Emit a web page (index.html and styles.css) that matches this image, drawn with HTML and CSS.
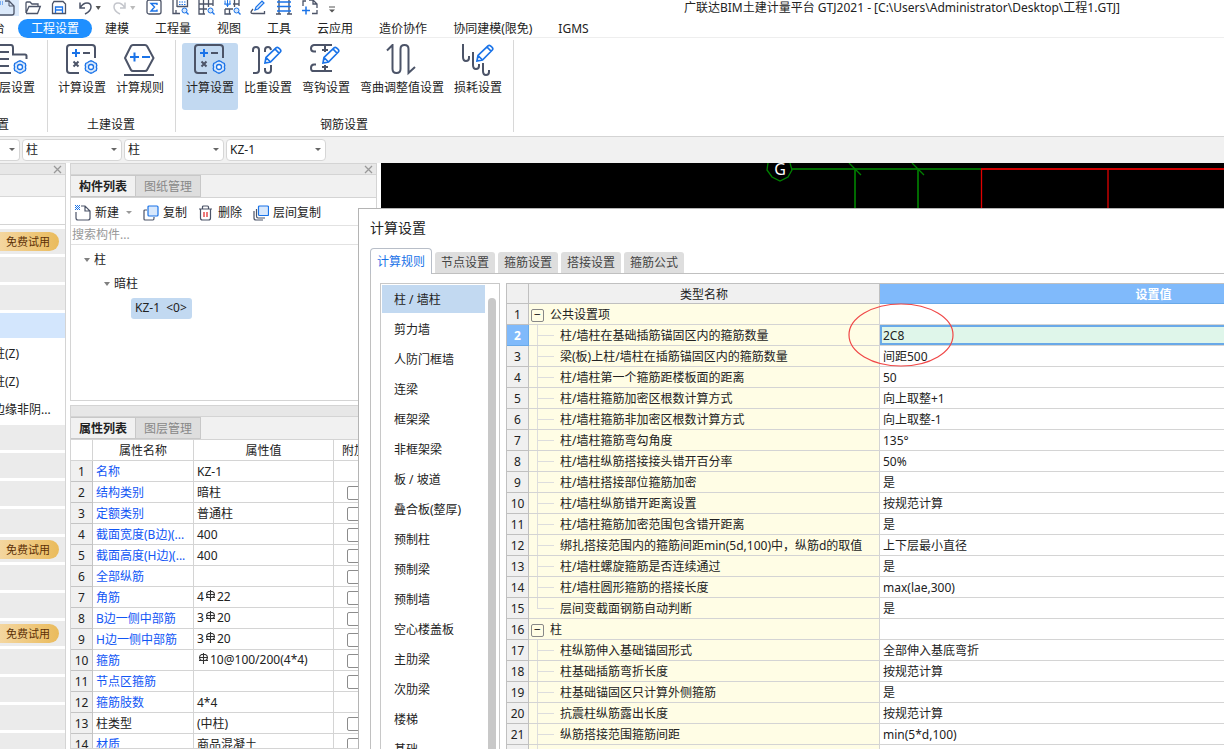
FILE: index.html
```html
<!DOCTYPE html>
<html lang="zh-CN">
<head>
<meta charset="utf-8">
<title>广联达BIM土建计量平台 GTJ2021</title>
<link rel="stylesheet" href="styles.css">
</head>
<body>
<svg class="defs" aria-hidden="true">
  <symbol id="gear" viewBox="0 0 14 14"><path d="M5 1.500 7 .8 9 1.500 10.300 2.500 12.300 3.500 12.800 5.800 12.300 7 12.800 8.200 12.300 10.500 10.300 11.500 9 12.500 7 13.200 5 12.500 3.700 11.500 1.700 10.500 1.200 8.200 1.700 7 1.200 5.800 1.700 3.500 3.700 2.500Z" fill="#d8e8fc" stroke="#1a73e8" stroke-width="1.300"/><circle cx="7" cy="7" r="2.500" fill="#fff" stroke="#1a73e8" stroke-width="1.300"/></symbol>
  <symbol id="pencil" viewBox="0 0 18 18"><path d="M1 17 2 11.500 12 1.800Q13.200 .8 14.500 1.800L16.300 3.500Q17.300 4.800 16.300 6L6.500 16Z M2 11.500 6.500 16 M11 3 15 7.200" fill="none" stroke="#1a73e8" stroke-width="1.700"/></symbol>
  <symbol id="calc" viewBox="0 0 32 32"><path d="M29 14V4Q29 1 26 1H4Q1 1 1 4V26Q1 29 4 29H13M17 9H24M7.500 17.500 12.500 22.500M12.500 17.500 7.500 22.500" fill="none" stroke="#4c5468" stroke-width="2"/><path d="M6 9H14M10 5V13" stroke="#1a73e8" stroke-width="2"/><use href="#gear" x="18" y="16" width="14" height="14"/></symbol>
  <symbol id="rebar" viewBox="0 0 11 11"><path d="M5.500 0V11M1 4.500H10M1 7.500H10M3.500 1.500Q1.500 2.500 1.500 4.500T3.500 7.500M7.500 1.500Q9.500 2.500 9.500 4.500T7.500 7.500M3.500 1.500H7.500" fill="none" stroke="#333" stroke-width="1.100"/></symbol>
  <symbol id="lens" viewBox="0 0 8 8"><circle cx="3.500" cy="3.500" r="2.500" fill="#d8e8fc" stroke="#1a73e8"/><path d="M5.300 5.300 7.500 7.500" stroke="#1a73e8" stroke-width="1.300"/></symbol>
</svg>

<div class="app">
  <header class="titlebar">
    <div class="quick">
      <button class="q on" aria-label="新建"><svg width="16" height="16"><path d="M6 1H10L15 6V13Q15 15 13 15H0" fill="none" stroke="#4c5468" stroke-width="1.300"/><path d="M10 1V6H15" fill="none" stroke="#4c5468"/><path d="M1 2H5M1 4H5" stroke="#1a73e8" stroke-dasharray="1 1"/></svg></button>
      <button class="q" aria-label="打开"><svg width="16" height="16"><path d="M1 14V4Q1 3 2 3H5L7 5H13V7.500M1 14 4 7.500H15.300L12.500 14.500H1" fill="none" stroke="#4c5468" stroke-width="1.300"/></svg></button>
      <button class="q" aria-label="保存"><svg width="16" height="16"><path d="M3 2.500H12L14.500 5V14.500H1.500V5Z" fill="none" stroke="#4c5468" stroke-width="1.300"/><path d="M4.500 14V8H11.500V14M4.500 11H11.500" fill="none" stroke="#1a73e8" stroke-width="1.300"/></svg></button>
      <button class="q" aria-label="撤销"><svg width="16" height="16"><path d="M3 3.500V9H8M3 9Q6 4 10 4T14 8Q14 12 8 15" fill="none" stroke="#4c5468" stroke-width="1.500"/></svg></button>
      <button class="caret" aria-label="撤销列表"></button>
      <button class="q" aria-label="重做"><svg width="16" height="16"><path d="M13 3.500V9H8M13 9Q10 4 6 4T2 8Q2 12 8 15" fill="none" stroke="#c4c6cc" stroke-width="1.500"/></svg></button>
      <button class="caret dim" aria-label="重做列表"></button>
      <button class="q" aria-label="汇总计算"><svg width="16" height="16"><rect x="1" y="1" width="14" height="14" rx="2" fill="none" stroke="#4c5468" stroke-width="1.300"/><path d="M11 6V4.500H5L8.500 8 5 12H11V10.500" fill="none" stroke="#1a73e8" stroke-width="1.400"/></svg></button>
      <button class="q" aria-label="查看计算式"><svg width="16" height="16"><path d="M1 1V14.500H8M5 1V8M15.500 1V7.500H5M4 14.500V11" fill="none" stroke="#4c5468" stroke-width="1.300"/><path d="M7 3H14M7 5.500H14" stroke="#1a73e8" stroke-dasharray="1.500 1"/><use href="#lens" x="9" y="8" width="8" height="8"/></svg></button>
      <button class="q" aria-label="查看工程量"><svg width="16" height="16"><path d="M1 1V15H7M5.500 1V15M10.500 1V8M15 1V7M1 5H15M1 10H9" fill="none" stroke="#4c5468" stroke-width="1.300"/><use href="#lens" x="9" y="8" width="8" height="8"/></svg></button>
      <button class="q" aria-label="查看钢筋量"><svg width="16" height="16"><path d="M10.500 1V8M15 1V7M9 5H15M1 10H9M1 10V15H7M5.500 10V15" fill="none" stroke="#4c5468" stroke-width="1.300"/><path d="M0 5H7M3.500 1V8M1 1.500Q0 5 3.500 7Q7 5 6 1.500" fill="none" stroke="#1a73e8"/><use href="#lens" x="9" y="8" width="8" height="8"/></svg></button>
      <button class="q" aria-label="编辑"><svg width="16" height="16"><path d="M3 10Q-1 14.500 3 14.500H14.500V12" fill="none" stroke="#4c5468" stroke-width="1.300"/><path d="M5 11 6 8 12 2 14 4 8 10Z" fill="#d8e8fc" stroke="#1a73e8" stroke-width="1.200"/></svg></button>
      <button class="q" aria-label="钢筋三维"><svg width="16" height="16"><path d="M3 0V15M13 0V15M0 15H5M11 15H16" stroke="#4c5468" stroke-width="1.400"/><path d="M1 3H15M1 7.500H15M1 12H15" stroke="#1a73e8" stroke-width="1.500"/></svg></button>
      <button class="q" aria-label="添加"><svg width="16" height="16"><path d="M1 7V2H4M7 1H11L15 5V9M15 11V14.500H10M11 1V5H15" fill="none" stroke="#4c5468" stroke-width="1.300"/><path d="M0 11.500H8M4 7.500V15.500" stroke="#1a73e8" stroke-width="1.500"/></svg></button>
      <button class="q more" aria-label="更多"><svg width="8" height="8"><path d="M1 1H7" stroke="#555"/><path d="M1 3.500H7L4 6.500Z" fill="#555"/></svg></button>
    </div>
    <div class="caption">广联达BIM土建计量平台 GTJ2021 - [C:\Users\Administrator\Desktop\工程1.GTJ]</div>
  </header>

  <nav class="menu">
    <button>台</button><button class="active">工程设置</button><button>建模</button><button>工程量</button><button>视图</button><button>工具</button><button>云应用</button><button>造价协作</button><button>协同建模(限免)</button><button>IGMS</button>
  </nav>

  <div class="ribbon">
    <section class="group first">
      <div class="tools">
        <button class="tool"><svg width="32" height="32"><path d="M3 1H14Q16 1 16 4V10.500H28Q29.500 10.500 29.500 12V15M3 8H12M3 15H12M3 22H12M3 29H14" fill="none" stroke="#4c5468" stroke-width="2"/><use href="#gear" x="16" y="16" width="14" height="14"/></svg>层设置</button>
      </div>
      <h2>置</h2>
    </section>
    <section class="group">
      <div class="tools">
        <button class="tool"><svg width="32" height="32"><use href="#calc"/></svg>计算设置</button>
        <button class="tool"><svg width="32" height="32"><path d="M1 14 7 2Q7.500 1 9 1H21Q22.500 1 23 2L29.500 14 23 26Q22.500 27 21 27H9Q7.500 27 7 26ZM0 31H30" fill="none" stroke="#4c5468" stroke-width="2"/><path d="M6 13H15M10.500 8.500V17.500M18 13H26" stroke="#1a73e8" stroke-width="2"/></svg>计算规则</button>
      </div>
      <h2>土建设置</h2>
    </section>
    <section class="group">
      <div class="tools">
        <button class="tool active"><svg width="32" height="32"><use href="#calc"/></svg>计算设置</button>
        <button class="tool"><svg width="32" height="32"><path d="M1 8V6Q1 3 4 3T7 6V26Q7 29 4 29H1M13 8V6Q13 3 16 3Q18.500 3 19 6M19 21V26Q19 29 16 29T13 26V24" fill="none" stroke="#4c5468" stroke-width="2"/><use href="#pencil" x="12" y="2" width="18" height="18"/></svg>比重设置</button>
        <button class="tool"><svg width="32" height="32"><path d="M6 7.500H4Q1 7.500 1 4.500T4 1H22M6 20.500H4Q1 20.500 1 24T4 27H22M15 1V8M12 6H18M15 27V21M12 23H18" fill="none" stroke="#4c5468" stroke-width="2"/><path d="M12 19 14 13 24 3 29 7 18 19Z" fill="#fff"/><use href="#pencil" x="12" y="2" width="18" height="18"/></svg>弯钩设置</button>
        <button class="tool"><svg width="32" height="32"><path d="M1 6.500 6.500 1V25Q6.500 29 10.500 29T14.500 25V5Q14.500 1 18.500 1T22.500 5V29L29 23" fill="none" stroke="#4c5468" stroke-width="2"/></svg>弯曲调整值设置</button>
        <button class="tool"><svg width="32" height="32"><path d="M1 0V13Q1 17 4 17T7 14V12M11 8V21Q11 25 14 25T17 22V20M21 19V27Q21 31 24 31T27 28V26" fill="none" stroke="#4c5468" stroke-width="2"/><use href="#pencil" x="14" y="0" width="18" height="18"/></svg>损耗设置</button>
      </div>
      <h2>钢筋设置</h2>
    </section>
  </div>

  <div class="filters">
    <label class="combo short"><select aria-label="楼层"><option></option></select></label>
    <label class="combo"><select aria-label="构件大类"><option>柱</option></select></label>
    <label class="combo"><select aria-label="构件类型"><option>柱</option></select></label>
    <label class="combo"><select aria-label="构件"><option>KZ-1</option></select></label>
  </div>

  <main class="work">
    <aside class="nav-panel">
      <div class="grip"><button aria-label="关闭"><svg width="9" height="9"><path d="M1 1 8 8M8 1 1 8" stroke="#999" stroke-width="1.300"/></svg></button></div>
      <div class="strip"></div>
      <div class="blank"></div>
      <ul class="cats">
        <li><span class="badge">免费试用</span></li><li></li><li></li><li class="sel"></li>
        <li class="leaf">柱(Z)</li><li class="leaf">柱(Z)</li><li class="leaf">边缘非阴...</li>
        <li></li><li></li><li></li><li></li><li><span class="badge">免费试用</span></li><li></li><li></li><li><span class="badge">免费试用</span></li><li></li><li></li><li></li><li></li>
      </ul>
    </aside>

    <div class="docks">
      <section class="dock comp">
        <div class="grip"><button aria-label="关闭"><svg width="9" height="9"><path d="M1 1 8 8M8 1 1 8" stroke="#999" stroke-width="1.300"/></svg></button></div>
        <div class="tabs"><button class="active">构件列表</button><button>图纸管理</button></div>
        <div class="toolbar">
          <button><svg width="16" height="16"><path d="M6 1H10L15 6V13Q15 15 13 15H3Q1 15 1 13V7M10 1V6H15" fill="none" stroke="#4c5468" stroke-width="1.200"/><path d="M0 .5H5M0 2.500H5M0 4.500H5" stroke="#1a73e8" stroke-dasharray="1 1"/><path d="M1 1.500H5M1 3.500H5" stroke="#1a73e8" stroke-dasharray="1 1"/></svg>新建<i class="tri"></i></button>
          <button><svg width="16" height="16"><path d="M4 5H2Q1 5 1 6V14Q1 15 2 15H10Q11 15 11 13V12" fill="none" stroke="#4c5468" stroke-width="1.200"/><rect x="5" y="1" width="10" height="10" rx="1" fill="#d8e8fc" stroke="#1a73e8" stroke-width="1.200"/></svg>复制</button>
          <button><svg width="16" height="16"><path d="M1 4H14M2.500 4V13Q2.500 15 4.500 15H10.500Q12.500 15 12.500 13V4M4.500 4V2Q4.500 1 5.500 1H9.500Q10.500 1 10.500 2V4" fill="none" stroke="#4c5468" stroke-width="1.200"/><path d="M6 7V12M9 7V12" stroke="#e02020" stroke-width="1.200"/></svg>删除</button>
          <button><svg width="16" height="16"><path d="M1 6V13Q1 15 3 15H10M3.500 4V11Q3.500 13 5 13H12" fill="none" stroke="#4c5468" stroke-width="1.200"/><rect x="5.500" y="1" width="10" height="9.500" rx="1" fill="#d8e8fc" stroke="#1a73e8" stroke-width="1.200"/></svg>层间复制</button>
        </div>
        <input class="search" type="text" placeholder="搜索构件..." aria-label="搜索构件">
        <ul class="tree">
          <li class="l1"><i class="tri"></i>柱</li>
          <li class="l2"><i class="tri"></i>暗柱</li>
          <li class="l3"><span>KZ-1&nbsp; &lt;0&gt;</span></li>
        </ul>
      </section>

      <section class="dock props">
        <div class="grip"></div>
        <div class="tabs"><button class="active">属性列表</button><button>图层管理</button></div>
        <table class="ptable">
          <colgroup><col class="c-no"><col class="c-name"><col class="c-val"><col></colgroup>
          <thead><tr><th></th><th>属性名称</th><th>属性值</th><th class="att">附加</th></tr></thead>
          <tbody>
            <tr><th>1</th><td>名称</td><td>KZ-1</td><td></td></tr>
            <tr><th>2</th><td>结构类别</td><td>暗柱</td><td><input type="checkbox" aria-label="附加 结构类别"></td></tr>
            <tr><th>3</th><td>定额类别</td><td>普通柱</td><td><input type="checkbox" aria-label="附加 定额类别"></td></tr>
            <tr><th>4</th><td>截面宽度(B边)(...</td><td>400</td><td><input type="checkbox" aria-label="附加 截面宽度"></td></tr>
            <tr><th>5</th><td>截面高度(H边)(...</td><td>400</td><td><input type="checkbox" aria-label="附加 截面高度"></td></tr>
            <tr><th>6</th><td>全部纵筋</td><td></td><td><input type="checkbox" aria-label="附加 全部纵筋"></td></tr>
            <tr><th>7</th><td>角筋</td><td class="bar">4<svg class="rb"><use href="#rebar"/></svg>22</td><td><input type="checkbox" aria-label="附加 角筋"></td></tr>
            <tr><th>8</th><td>B边一侧中部筋</td><td class="bar">3<svg class="rb"><use href="#rebar"/></svg>20</td><td><input type="checkbox" aria-label="附加 B边一侧中部筋"></td></tr>
            <tr><th>9</th><td>H边一侧中部筋</td><td class="bar">3<svg class="rb"><use href="#rebar"/></svg>20</td><td><input type="checkbox" aria-label="附加 H边一侧中部筋"></td></tr>
            <tr><th>10</th><td>箍筋</td><td class="bar"><svg class="rb"><use href="#rebar"/></svg>10@100/200(4*4)</td><td><input type="checkbox" aria-label="附加 箍筋"></td></tr>
            <tr><th>11</th><td>节点区箍筋</td><td></td><td><input type="checkbox" aria-label="附加 节点区箍筋"></td></tr>
            <tr><th>12</th><td>箍筋肢数</td><td>4*4</td><td></td></tr>
            <tr><th>13</th><td class="plain">柱类型</td><td>(中柱)</td><td><input type="checkbox" aria-label="附加 柱类型"></td></tr>
            <tr><th>14</th><td>材质</td><td>商品混凝土</td><td><input type="checkbox" aria-label="附加 材质"></td></tr>
          </tbody>
        </table>
      </section>
    </div>

    <div class="canvas">
      <svg width="100%" height="46">
        <path d="M410 6H600M474 6V46M537 6V46" stroke="#006a00" stroke-width="2"/>
        <path d="M468 0 480 12M531 0 543 12" stroke="#008000" stroke-width="1.300"/>
        <path d="M387 0 386 7 391 14 399 18 407 14 411 7 409 0" fill="none" stroke="#008000" stroke-width="1.300"/>
        <rect x="600" y="5" width="100%" height="2" fill="#d00000"/>
        <path d="M600.500 6V46M727 6V46" stroke="#e00000" stroke-width="1.300"/>
        <text x="399" y="12" text-anchor="middle" fill="#fff" font-size="16">G</text>
      </svg>
    </div>
  </main>

  <div class="dialog" role="dialog" aria-labelledby="dlg-title">
    <h1 id="dlg-title">计算设置</h1>
    <div class="dtabs"><button class="active">计算规则</button><button>节点设置</button><button>箍筋设置</button><button>搭接设置</button><button>箍筋公式</button></div>
    <div class="dbody">
      <div class="types">
        <ul>
          <li class="active">柱 / 墙柱</li><li>剪力墙</li><li>人防门框墙</li><li>连梁</li><li>框架梁</li><li>非框架梁</li><li>板 / 坡道</li><li>叠合板(整厚)</li><li>预制柱</li><li>预制梁</li><li>预制墙</li><li>空心楼盖板</li><li>主肋梁</li><li>次肋梁</li><li>楼梯</li><li>基础</li>
        </ul>
        <div class="thumb"></div>
      </div>
      <div class="gridwrap">
        <table class="grid">
          <colgroup><col class="g-no"><col class="g-name"><col class="g-val"></colgroup>
          <thead><tr><th></th><th>类型名称</th><th class="hot">设置值</th></tr></thead>
          <tbody>
            <tr class="top"><th>1</th><td><button aria-label="折叠">−</button>公共设置项</td><td></td></tr>
            <tr class="cur"><th>2</th><td>柱/墙柱在基础插筋锚固区内的箍筋数量</td><td><input type="text" value="2C8" aria-label="设置值"></td></tr>
            <tr><th>3</th><td>梁(板)上柱/墙柱在插筋锚固区内的箍筋数量</td><td>间距500</td></tr>
            <tr><th>4</th><td>柱/墙柱第一个箍筋距楼板面的距离</td><td>50</td></tr>
            <tr><th>5</th><td>柱/墙柱箍筋加密区根数计算方式</td><td>向上取整+1</td></tr>
            <tr><th>6</th><td>柱/墙柱箍筋非加密区根数计算方式</td><td>向上取整-1</td></tr>
            <tr><th>7</th><td>柱/墙柱箍筋弯勾角度</td><td>135°</td></tr>
            <tr><th>8</th><td>柱/墙柱纵筋搭接接头错开百分率</td><td>50%</td></tr>
            <tr><th>9</th><td>柱/墙柱搭接部位箍筋加密</td><td>是</td></tr>
            <tr><th>10</th><td>柱/墙柱纵筋错开距离设置</td><td>按规范计算</td></tr>
            <tr><th>11</th><td>柱/墙柱箍筋加密范围包含错开距离</td><td>是</td></tr>
            <tr><th>12</th><td>绑扎搭接范围内的箍筋间距min(5d,100)中，纵筋d的取值</td><td>上下层最小直径</td></tr>
            <tr><th>13</th><td>柱/墙柱螺旋箍筋是否连续通过</td><td>是</td></tr>
            <tr><th>14</th><td>柱/墙柱圆形箍筋的搭接长度</td><td>max(lae,300)</td></tr>
            <tr class="last"><th>15</th><td>层间变截面钢筋自动判断</td><td>是</td></tr>
            <tr class="top"><th>16</th><td><button aria-label="折叠">−</button>柱</td><td></td></tr>
            <tr><th>17</th><td>柱纵筋伸入基础锚固形式</td><td>全部伸入基底弯折</td></tr>
            <tr><th>18</th><td>柱基础插筋弯折长度</td><td>按规范计算</td></tr>
            <tr><th>19</th><td>柱基础锚固区只计算外侧箍筋</td><td>是</td></tr>
            <tr><th>20</th><td>抗震柱纵筋露出长度</td><td>按规范计算</td></tr>
            <tr><th>21</th><td>纵筋搭接范围箍筋间距</td><td>min(5*d,100)</td></tr>
            <tr><th></th><td></td><td></td></tr>
          </tbody>
        </table>
        <svg class="mark" width="106" height="64"><ellipse cx="53" cy="32" rx="52" ry="31" fill="none" stroke="#f04848" stroke-width="1.200"/></svg>
      </div>
    </div>
  </div>
</div>
</body>
</html>
```
FILE: styles.css
```css
* { box-sizing: border-box; }
body { margin: 0; }
body, button, input, select { font: 12px/20px "Noto Sans", "Noto Sans CJK SC", sans-serif; color: #222; }
button { margin: 0; padding: 0; border: 0; background: none; white-space: nowrap; }
ul { margin: 0; padding: 0; list-style: none; }
h1, h2 { margin: 0; font-weight: 400; }
svg { display: block; flex: none; }
.defs { position: absolute; width: 0; height: 0; }
.app { position: relative; display: flex; flex-direction: column; height: 100vh; overflow: hidden; background: #fff; }

.titlebar { display: flex; height: 17px; flex: none; }
.quick { display: flex; gap: 10px; flex: none; width: 336px; }
.q { width: 16px; height: 16px; flex: none; margin-top: -1px; }
.q svg { overflow: visible; }
.q.on { width: 19px; height: 17px; margin-right: -4px; background: #dbe9fa; }
.q.on svg { margin-left: -1px; }
.q.more { width: 8px; padding-top: 5px; }
.caret { width: 8px; margin: 6px 0 0 -8px; height: 4px; background: #555; clip-path: polygon(10% 0, 90% 0, 50% 100%); }
.caret.dim { background: #bbb; }
.caption { flex: 1; padding-left: 348px; line-height: 16px; white-space: nowrap; }

.menu { display: flex; flex: none; height: 21px; margin-left: -20px; border-bottom: 1px solid #eee; }
.menu button { height: 19px; margin-top: 2px; padding: 0 13px; line-height: 19px; border-radius: 10px; }
.menu .active { background: #1e8fff; color: #fff; }

.ribbon { display: flex; flex: none; height: 99px; padding: 2px 0 4px; border-bottom: 1px solid #d4d4d4; }
.group { display: flex; flex-direction: column; padding: 3px 7px 0 6px; border-right: 1px solid #d8d8d8; }
.group h2 { font-size: 12px; line-height: 20px; text-align: center; margin-top: 5px; }
.group.first { width: 48px; align-items: flex-end; }
.group.first h2 { align-self: flex-start; margin-left: -9px; }
.tools { display: flex; gap: 2px; }
.tool { display: flex; flex-direction: column; align-items: center; height: 67px; padding: 1px 4px; gap: 2px; border-radius: 3px; }
.tool.active { background: #c2d9f1; }
.group.first .tool { padding-right: 3px; }
.group.first .tool svg { margin-right: 8px; }

.filters { display: flex; flex: none; height: 26px; gap: 2px; padding: 2px 0; background: #f1f1f1; }
.combo { position: relative; width: 100px; }
.combo.short { width: 20px; }
.combo select { display: block; width: 100%; height: 22px; padding: 0 3px; border: 1px solid #d6d6d6; border-radius: 4px; background: #fff; appearance: none; }
.combo.short select { border-left: 0; border-radius: 0 4px 4px 0; }
.combo::after, .tri { content: ""; width: 6px; height: 4px; background: #666; clip-path: polygon(0 0, 100% 0, 50% 100%); }
.combo::after { position: absolute; right: 5px; top: 9px; height: 3px; }

.work { display: flex; flex: 1; min-height: 0; }
.grip { display: flex; justify-content: flex-end; align-items: center; height: 12px; padding-right: 3px; background: #e7e7e7; border-top: 1px solid #d4d4d4; border-bottom: 1px solid #d4d4d4; flex: none; }
.nav-panel { width: 66px; flex: none; overflow: hidden; border-right: 1px solid #d4d4d4; }
.strip { height: 22px; background: #f1f1f1; border-bottom: 1px solid #d8d8d8; }
.blank { height: 28px; border-bottom: 1px solid #d4d4d4; }
.cats { display: flex; flex-direction: column; gap: 3px; padding-top: 4px; }
.cats li { height: 25px; flex: none; background: #ebebeb; line-height: 25px; white-space: nowrap; display: flex; align-items: center; }
.cats .sel { background: #d3e6fd; }
.cats .leaf { background: none; margin-left: -7px; }
.badge { width: 72px; margin-left: -13px; height: 19px; padding-left: 19px; font-size: 11px; line-height: 19px; color: #5c3006; border-radius: 10px; background: linear-gradient(90deg, #f6dcae, #eabb5c); }

.docks { display: flex; flex-direction: column; gap: 4px; width: 307px; margin-left: 4px; flex: none; }
.dock { border: 1px solid #d4d4d4; border-top: 0; }
.comp { height: 238px; flex: none; }
.props { flex: 1; min-height: 0; overflow: hidden; }
.tabs { display: flex; height: 23px; background: #f1f1f1; border-bottom: 1px solid #d4d4d4; }
.tabs button { width: 65px; padding-top: 2px; color: #888; background: #dedede; border: 1px solid #c8c8c8; border-left: 0; line-height: 18px; }
.tabs .active { color: #222; font-weight: 700; background: #f1f1f1; }
.toolbar { display: flex; gap: 11px; height: 28px; padding: 2px 4px 0; border-bottom: 1px solid #e2e2e2; }
.toolbar button { display: flex; align-items: center; gap: 4px; }
.toolbar .tri { margin-left: 3px; height: 3px; background: #999; }
.search { display: block; width: 100%; height: 19px; padding: 0 1px; border: 0; border-bottom: 1px solid #e2e2e2; }
.search::placeholder { color: #999; }
.tree { padding-top: 3px; }
.tree li { display: flex; align-items: center; gap: 4px; height: 24px; }
.tri { background: #808080; }
.l1 { padding-left: 13px; }
.l2 { padding-left: 33px; }
.l3 { padding-left: 60px; }
.l3 span { height: 21px; padding: 0 5px 0 4px; background: #c2d9f1; border-radius: 3px; }

table { border-spacing: 0; table-layout: fixed; }
th, td { height: 21px; padding: 2px 0 0; font-weight: 400; line-height: 18px; white-space: nowrap; overflow: hidden; border-right: 1px solid #d4d4d4; border-bottom: 1px solid #d4d4d4; }
.ptable { width: 305px; }
.c-no { width: 22px; }
.c-name { width: 101px; }
.c-val { width: 140px; }
.ptable td { padding-left: 3px; text-align: left; }
.ptable tbody th { background: #f0f0f0; border-color: #c4c4c4; }
.ptable td:nth-child(2) { color: #1156f5; }
.ptable td.plain { color: #222; }
.ptable td.bar { padding-top: 0; }
.ptable .att { text-align: left; padding-left: 8px; }
.ptable td:last-child { padding-left: 13px; }
.ptable input { display: block; appearance: none; width: 14px; height: 14px; margin: 0; border: 1px solid #8c8c8c; border-radius: 2px; background: #fff; }
.rb { display: inline-block; width: 11px; height: 11px; margin: 0 1px; vertical-align: 0; }

.canvas { flex: 1; margin-left: 4px; background: #000; overflow: hidden; }

/* settings window floats over the workspace */
.dialog { position: absolute; left: 358px; top: 208px; right: 0; bottom: 0; display: flex; flex-direction: column; padding-left: 12px; overflow: hidden; background: #fff; border: 1px solid #b4b4b4; border-right: 0; border-bottom: 0; }
.dialog h1 { height: 39px; margin-left: -1px; font-size: 14px; line-height: 38px; flex: none; }
.dtabs { display: flex; align-items: flex-end; gap: 3px; height: 26px; flex: none; border-bottom: 1px solid #c0c0c0; margin-left: -1px; }
.dtabs button { width: 60px; height: 21px; background: #dedede; border-radius: 3px 3px 0 0; color: #444; }
.dtabs .active { width: 62px; height: 26px; margin-bottom: -1px; background: #fff; border: 1px solid #b8bec8; border-bottom: 0; border-radius: 4px 4px 0 0; color: #1a73e8; }
.dbody { display: flex; flex: 1; min-height: 0; gap: 6px; margin-left: -1px; padding: 9px 0 0 9px; border-left: 1px solid #c0c0c0; }
.types { display: flex; width: 120px; flex: none; padding: 1px 1px 0; border: 1px solid #c8c8c8; border-bottom: 0; justify-content: space-between; overflow: hidden; }
.types ul { width: 103px; }
.types li { height: 28px; margin-bottom: 2px; padding: 2px 0 0 12px; line-height: 26px; }
.types .active { background: #c2d9f1; }
.thumb { width: 8px; margin: 13px 2px 0 0; border-radius: 4px 4px 0 0; background: #c8c8c8; }
.gridwrap { position: relative; flex: 1; overflow: hidden; border-left: 1px solid #c0c0c0; border-top: 1px solid #c0c0c0; }
.grid { width: 921px; }
.g-no { width: 22px; }
.g-name { width: 351px; }
.grid thead th { height: 20px; line-height: 17px; background: #f0f0f0; border-color: #c0c0c0; }
.grid thead .hot { color: #fff; font-weight: 700; background: #80bafb; border-color: #69a9e8; }
.grid tbody th { background: #f0f0f0; border-color: #c0c0c0; }
.grid td { padding-left: 3px; }
.grid td:nth-child(2) { padding-left: 31px; background: linear-gradient(#ddd, #ddd) 8px 0 / 1px 100% no-repeat, linear-gradient(#ddd, #ddd) 8px 10px / 17px 1px no-repeat, #fffde5; }
.grid .last td:nth-child(2) { background-size: 1px 10px, 17px 1px, auto; }
.grid .top td:nth-child(2) { padding-left: 2px; background: #fffde5; }
.grid td button { width: 13px; height: 13px; margin-right: 6px; border: 1px solid #888; border-radius: 2px; line-height: 10px; vertical-align: 0; }
.grid .cur th { color: #fff; font-weight: 700; background: #80bafb; border-color: #69a9e8; }
.grid .cur td:last-child { padding: 0; }
.grid input { display: block; width: 100%; height: 20px; padding: 1px 1px 0; border: 2px solid #69a9e8; background: #dff6ea; line-height: 15px; }
.mark { position: absolute; left: 341px; top: 19px; }
```
